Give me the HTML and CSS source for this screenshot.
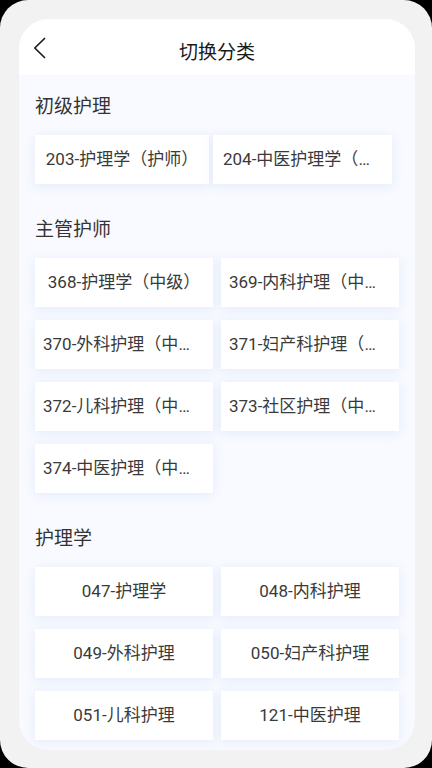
FILE: index.html
```html
<!DOCTYPE html>
<html lang="zh-CN">

<head>
    <meta charset="UTF-8">
    <meta name="viewport" content="width=device-width, initial-scale=1.0">
    <title>切换分类</title>
    <link rel="stylesheet" href="styles.css">
</head>

<body>
    <div class="screen">
        <div class="sheet">
            <!-- 顶部标题栏 -->
            <div class="top-bar">
                <div class="back-btn">
                    <svg width="14" height="22" viewBox="0 0 14 22">
                        <polyline points="11.5,1.5 1.8,11 11.5,20.5" fill="none" stroke="#1a1a1a" stroke-width="1.7" stroke-linecap="round" stroke-linejoin="round" />
                    </svg>
                </div>
                <div class="top-title">切换分类</div>
                <div></div>
            </div>

            <div class="content">
                <!-- 初级护理 -->
                <div class="group">
                    <div class="group-title">初级护理</div>
                    <div class="tag-row">
                        <div class="tag tag-first">203-护理学（护师）</div>
                        <div class="tag tag-second">204-中医护理学（护师）</div>
                    </div>
                </div>

                <!-- 主管护师 -->
                <div class="group">
                    <div class="group-title">主管护师</div>
                    <div class="tag-grid">
                        <div class="tag">368-护理学（中级）</div>
                        <div class="tag">369-内科护理（中级）</div>
                        <div class="tag">370-外科护理（中级）</div>
                        <div class="tag">371-妇产科护理（中级）</div>
                        <div class="tag">372-儿科护理（中级）</div>
                        <div class="tag">373-社区护理（中级）</div>
                        <div class="tag">374-中医护理（中级）</div>
                    </div>
                </div>

                <!-- 护理学 -->
                <div class="group">
                    <div class="group-title">护理学</div>
                    <div class="tag-grid">
                        <div class="tag">047-护理学</div>
                        <div class="tag">048-内科护理</div>
                        <div class="tag">049-外科护理</div>
                        <div class="tag">050-妇产科护理</div>
                        <div class="tag">051-儿科护理</div>
                        <div class="tag">121-中医护理</div>
                    </div>
                </div>
            </div>
        </div>
    </div>
</body>

</html>
```

FILE: styles.css
```css
html,
body {
    margin: 0;
    height: 100%;
    background-color: #000;
}

body {
    font-family: Roboto, "Noto Sans CJK SC", sans-serif;
    color: #333;
}

.screen {
    height: 768px;
    background-color: #f2f2f2;
    border-radius: 28px;
    padding: 19px 17px 18px 19px;
    box-sizing: border-box;
}

.sheet {
    height: 100%;
    border-radius: 30px;
    overflow: hidden;
    background-color: #f8faff;
    display: flex;
    flex-direction: column;
}

/* 顶部标题栏 */
.top-bar {
    height: 56px;
    flex-shrink: 0;
    background-color: #fff;
    display: grid;
    grid-template-columns: 1fr auto 1fr;
    align-items: center;
    padding: 0 14px;
}

.back-btn {
    display: flex;
    align-items: center;
    height: 22px;
    padding-top: 2px;
}

.top-title {
    font-size: 19px;
    color: #1a1a1a;
    padding-top: 6px;
}

.content {
    padding: 18px 16px 0 16px;
}

.group {
    margin-bottom: 32px;
}

.group-title {
    font-size: 19px;
    line-height: 24px;
    height: 24px;
    padding-top: 2px;
    color: #333;
    margin-bottom: 16px;
}

.tag-row {
    display: flex;
    gap: 4px;
}

.tag-grid {
    display: grid;
    grid-template-columns: 1fr 1fr;
    column-gap: 8px;
    row-gap: 13px;
}

.tag {
    height: 49px;
    line-height: 49px;
    background-color: #fff;
    box-shadow: 0 2px 10px rgba(205, 218, 242, 0.45);
    font-size: 17px;
    color: #3a3a3a;
    text-align: center;
    padding: 0 8px;
    white-space: nowrap;
    overflow: hidden;
    text-overflow: ellipsis;
    min-width: 0;
}

/* 初级护理一行两个，宽度不等 */
.tag-first,
.tag-second {
    height: 49px;
    padding: 0 10px;
    flex-shrink: 0;
}

.tag-first {
    width: 154px;
}

.tag-second {
    width: 159px;
}
```
